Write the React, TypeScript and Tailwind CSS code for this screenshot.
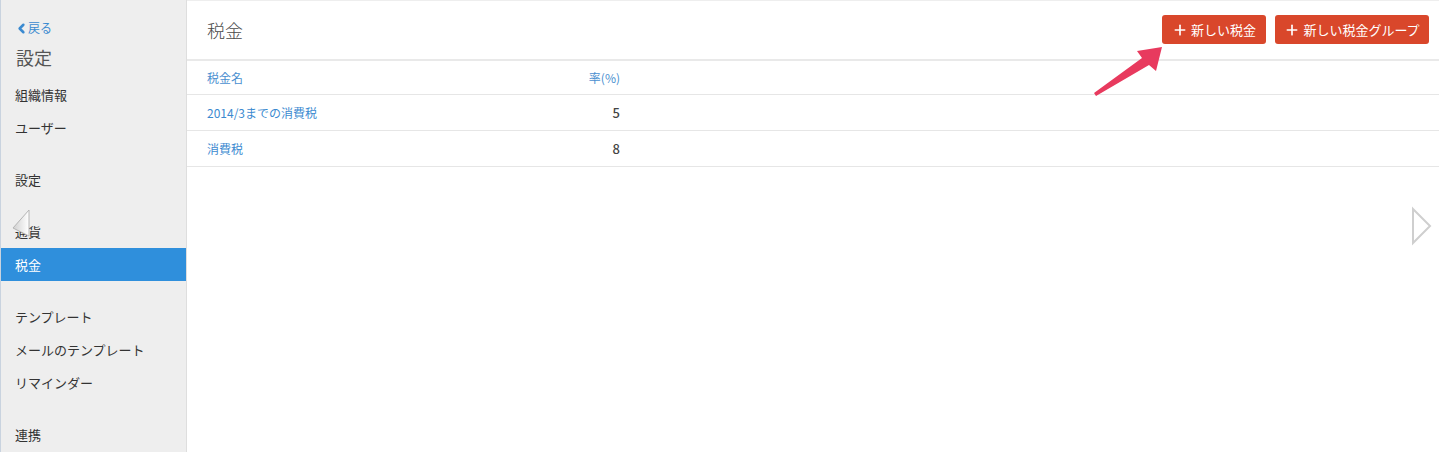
import { ChevronLeft, Plus } from 'lucide-react';

const font = { fontFamily: '"Noto Sans CJK JP", "Noto Sans", sans-serif' };

const taxes = [
  { name: '2014/3までの消費税', rate: 5 },
  { name: '消費税', rate: 8 },
];

const NavItem = ({ label, active = false }: { label: string; active?: boolean }) => (
  <div
    className={`h-[33px] flex items-center px-[14px] text-[13px] ${
      active ? 'bg-[#2f8fdc] text-white' : 'text-[#333333]'
    }`}
  >
    {label}
  </div>
);

const App = () => {
  return (
    <div className="relative flex h-[452px] w-[1439px] overflow-hidden bg-white" style={font}>
      {/* Sidebar */}
      <aside className="w-[187px] shrink-0 bg-[#eeeeee] border-l border-[#c9d3df] border-r border-r-[#dedede]">
        <div className="h-[78px] pt-[19px]">
          <div className="flex items-center pl-[13px] text-[12px] text-[#3b8ad0] leading-[18px]">
            <ChevronLeft size={15} strokeWidth={4} className="-mr-[1px]" />
            <span>戻る</span>
          </div>
          <div className="pl-[15px] mt-[8px] text-[18px] leading-[24px] text-[#555555]">設定</div>
        </div>

        <NavItem label="組織情報" />
        <NavItem label="ユーザー" />
        <div className="h-[19px]" />
        <NavItem label="設定" />
        <div className="h-[19px]" />
        <NavItem label="通貨" />
        <NavItem label="税金" active />
        <div className="h-[19px]" />
        <NavItem label="テンプレート" />
        <NavItem label="メールのテンプレート" />
        <NavItem label="リマインダー" />
        <div className="h-[19px]" />
        <NavItem label="連携" />
      </aside>

      {/* Main */}
      <main className="flex-1 border-t border-[#eeeeee]">
        <div className="h-[60px] flex items-center justify-between pl-[20px] pr-[10px] border-b-2 border-[#e9e9e9]">
          <h1 className="text-[18px] text-[#4a4a4a] font-light">税金</h1>
          <div className="flex gap-[9px] -mt-[1px]">
            <button className="h-[29px] w-[104px] flex items-center justify-center gap-[3px] rounded-[3px] bg-[#d9472b] text-white text-[13px]">
              <Plus size={16} strokeWidth={2.5} />
              新しい税金
            </button>
            <button className="h-[29px] w-[154px] flex items-center justify-center gap-[3px] rounded-[3px] bg-[#d9472b] text-white text-[13px]">
              <Plus size={16} strokeWidth={2.5} />
              新しい税金グループ
            </button>
          </div>
        </div>

        <div className="h-[34px] flex items-center pl-[20px] border-b border-[#e6e6e6] text-[12px] text-[#4a8fd0]">
          <div className="w-[340px]">税金名</div>
          <div className="w-[73px] text-right">率(%)</div>
        </div>
        {taxes.map((t) => (
          <div key={t.name} className="h-[36px] flex items-center pl-[20px] border-b border-[#e6e6e6] text-[12px]">
            <div className="w-[340px] text-[#3b8ad0]">{t.name}</div>
            <div className="w-[73px] text-right text-[#444444] font-medium text-[13px]">{t.rate}</div>
          </div>
        ))}
      </main>

      {/* Carousel arrows over the page */}
      <svg className="absolute left-[11px] top-[208px]" width="22" height="32" viewBox="0 0 22 32">
        <defs>
          <linearGradient id="lg" x1="0" y1="0" x2="1" y2="0">
            <stop offset="0" stopColor="#d0d0d0" />
            <stop offset="1" stopColor="#ffffff" />
          </linearGradient>
        </defs>
        <polygon points="18,2 2,20 18,28" fill="url(#lg)" stroke="#b5b5b5" strokeWidth="1" />
      </svg>
      <svg className="absolute left-[1410px] top-[206px]" width="24" height="40" viewBox="0 0 24 40">
        <polygon points="3,3 20,20 3,37" fill="#ffffff" stroke="#cfcfcf" strokeWidth="2" />
      </svg>

      {/* Callout arrow */}
      <svg className="absolute left-[1090px] top-[42px]" width="80" height="58" viewBox="0 0 80 58">
        <polygon points="4,51 52,16 47,9 72,5 66,29 59,23 6,54" fill="#e83a5e" />
      </svg>
    </div>
  );
};

export default App;
